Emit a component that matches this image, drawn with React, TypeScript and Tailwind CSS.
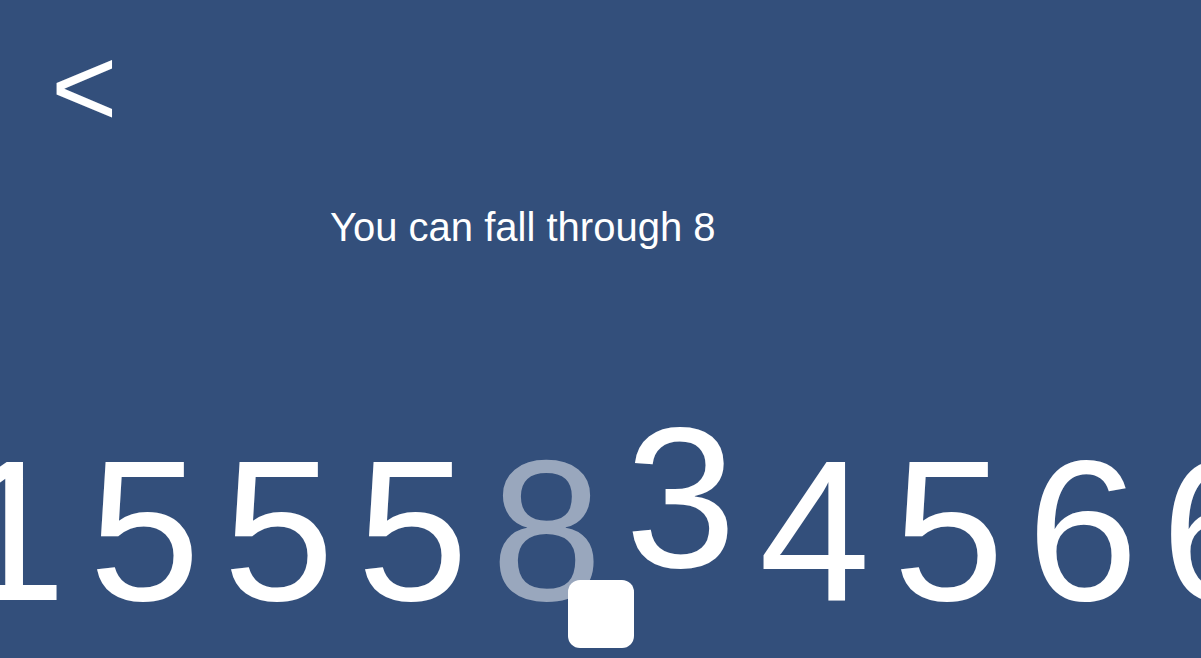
export default function App() {
  const digits = ["1", "5", "5", "5", "8", "3", "4", "5", "6", "6"];
  return (
    <div
      className="relative h-[658px] w-full overflow-hidden bg-[#334f7b] text-white"
      style={{ fontFamily: '"Liberation Sans", Arial, sans-serif' }}
    >
      <div className="h-[150px] pl-[51px] pt-[30px] text-[114px] leading-none">&lt;</div>
      <div className="mt-[57px] pl-[330px] text-[40px] leading-none">You can fall through 8</div>
      <div className="mt-[184px] ml-[-45px] flex">
        {digits.map((d, i) => (
          <span
            key={i}
            className={
              i === 4
                ? "w-[134px] shrink-0 text-[200px] leading-none text-[#99a7bd]"
                : i === 5
                ? "w-[134px] shrink-0 -translate-y-[33px] text-[200px] leading-none"
                : "w-[134px] shrink-0 text-[200px] leading-none"
            }
          >
            {d}
          </span>
        ))}
      </div>
      <div className="absolute left-[568px] top-[580px] h-[68px] w-[66px] rounded-[12px] bg-white" />
    </div>
  );
}
